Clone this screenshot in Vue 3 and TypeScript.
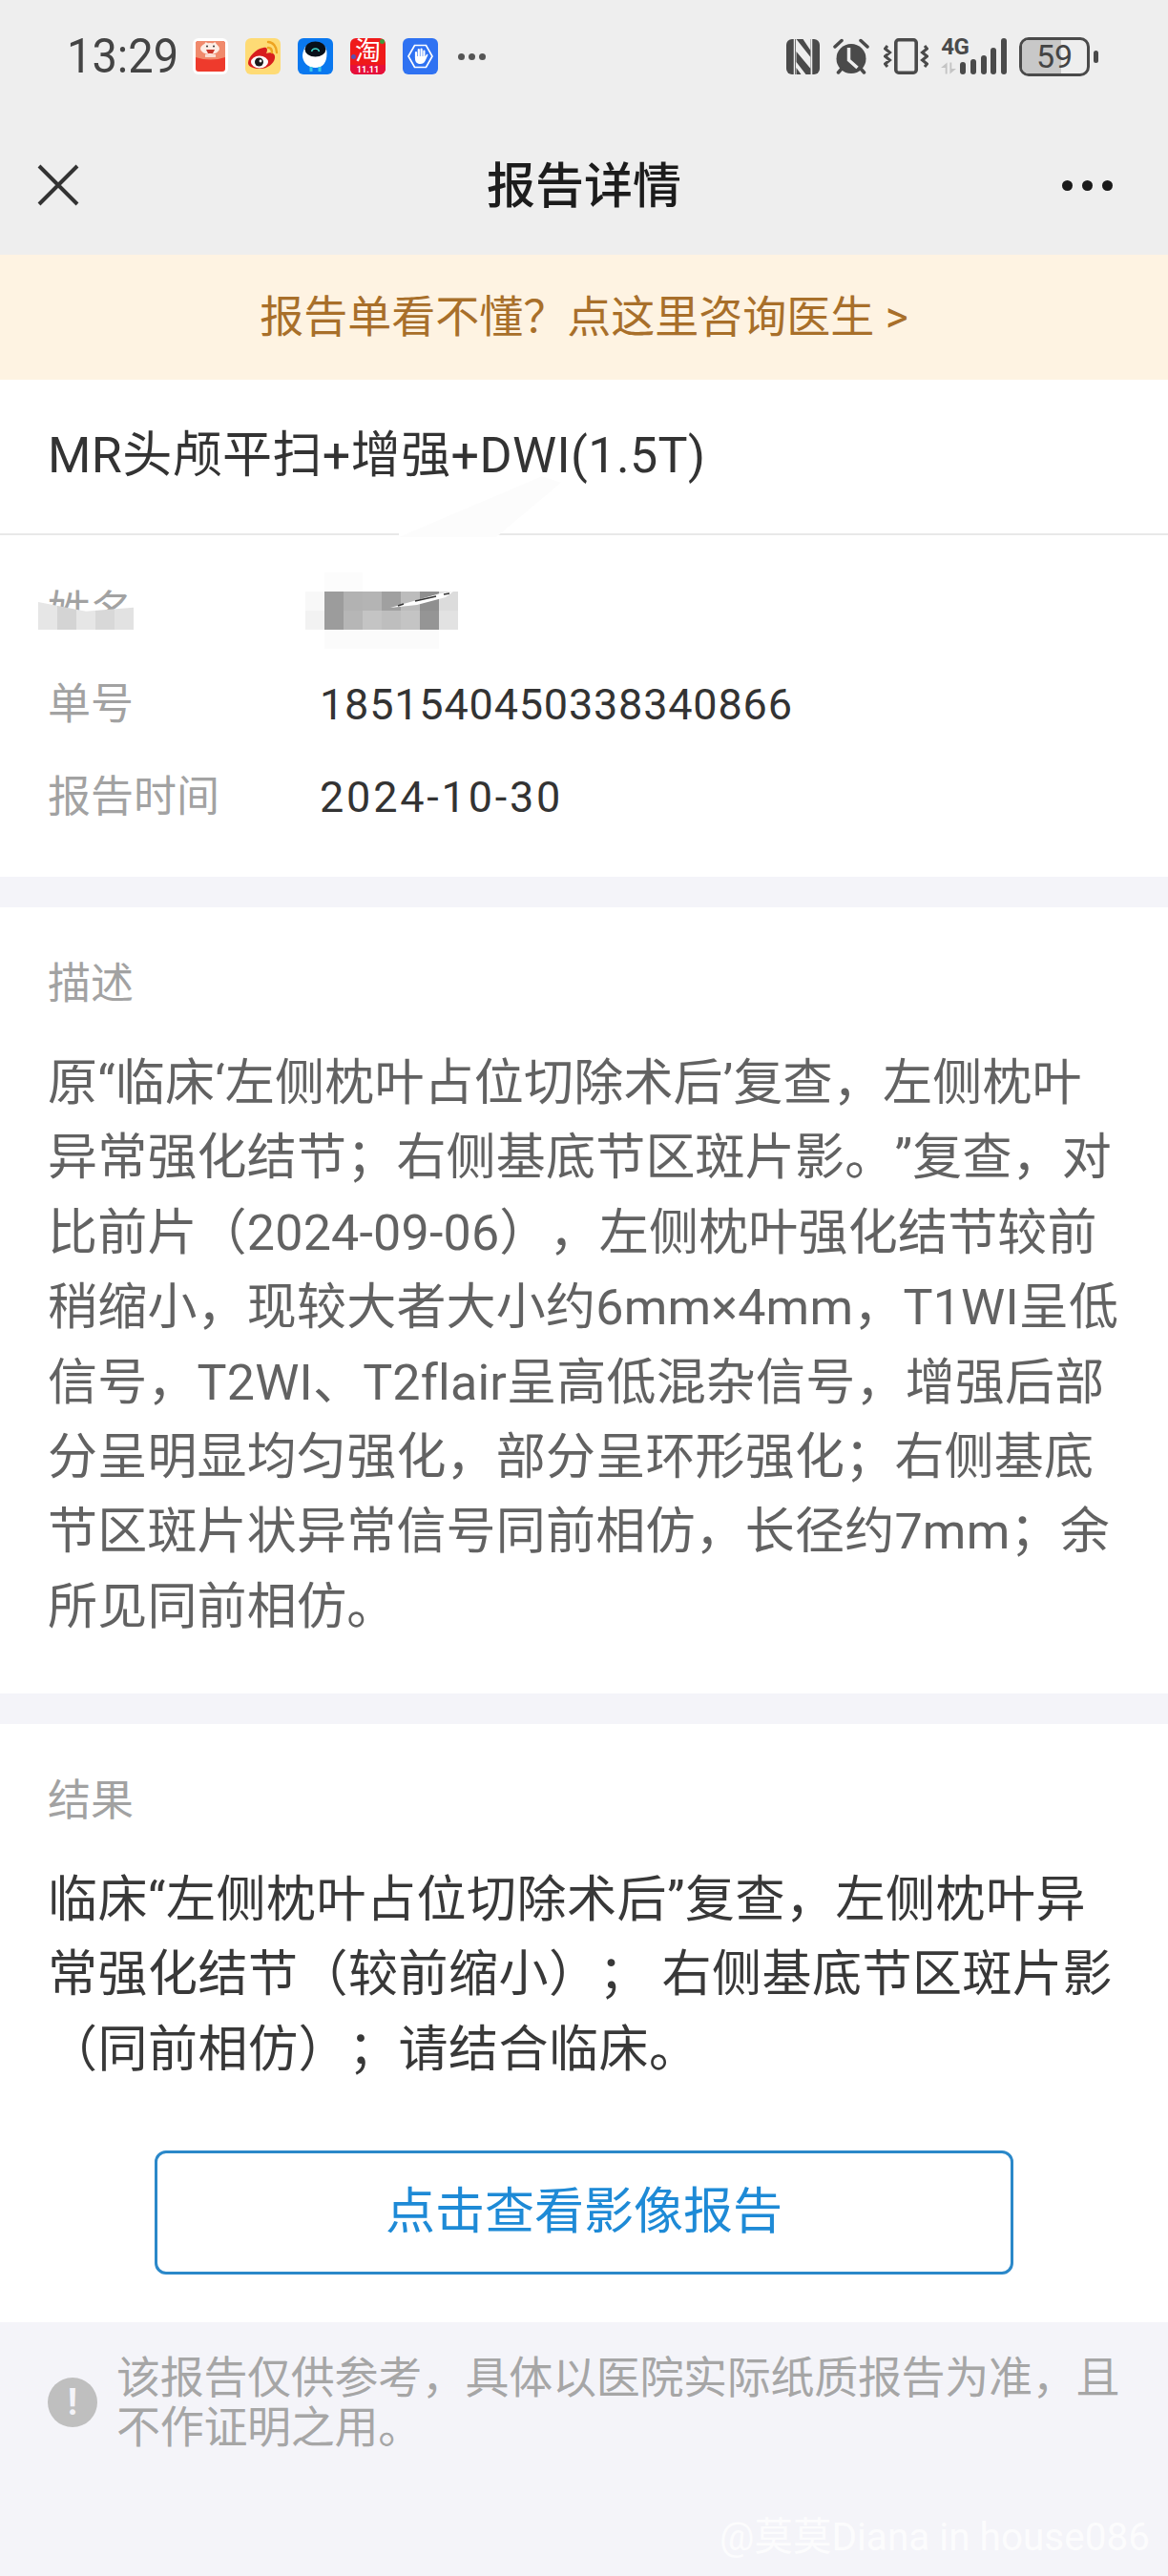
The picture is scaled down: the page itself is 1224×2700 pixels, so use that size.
<template>
  <div class="page">
    <header class="top">
      <div class="status">
        <span class="time">13:29</span>
        <div class="apps">
          <svg class="app" viewBox="0 0 37 38">
            <rect width="37" height="38" rx="6" fill="#fff" />
            <rect x="3" y="3" width="31" height="32" rx="3" fill="#ee3a2c" />
            <path d="M3 6a3 3 0 0 1 3-3h25a3 3 0 0 1 3 3v14q-15 5-31 0z" fill="#f08a6c" />
            <ellipse cx="18" cy="11" rx="10" ry="6" fill="#fdeee6" />
            <path d="M12 9l3-4M25 9l-3-4" stroke="#fdeee6" stroke-width="3" />
            <path d="M14 12h9l-2 4h-5z" fill="#c8352a" />
            <circle cx="15" cy="8.500" r="1" fill="#333" />
            <circle cx="22" cy="8.500" r="1" fill="#333" />
            <rect x="13" y="17" width="11" height="3" fill="#fbdcd0" />
          </svg>
          <svg class="app" viewBox="0 0 37 38">
            <rect width="37" height="38" rx="6" fill="#fedb75" />
            <path d="M3 26c0-6 8-15 16-16 4-1 5 2 3 6 5-2 10 0 9 5-1 6-8 11-15 11-7 0-13-2-13-6z" fill="#d81e1e" />
            <ellipse cx="15" cy="25" rx="9" ry="6.500" fill="#fff" />
            <circle cx="14.500" cy="25" r="4.500" fill="#1b1b1b" />
            <circle cx="16" cy="24" r="1.400" fill="#fff" />
            <path d="M24 4c5 0 9 5 9 11M24 10c2.500 0 4 2 4 5" fill="none" stroke="#eea320" stroke-width="2.400" stroke-linecap="round" />
          </svg>
          <svg class="app" viewBox="0 0 37 38">
            <rect width="37" height="38" rx="6" fill="#0a78ef" />
            <path d="M18.500 4c8 0 12 5 12 12 0 9-4 15-12 15S5 25 5 18C6 9 11 4 18.500 4z" fill="#fff" />
            <ellipse cx="18.500" cy="11.500" rx="11" ry="8" fill="#08101a" />
            <path d="M14.500 14c1-4 7-4 8 0" fill="none" stroke="#3fd6c8" stroke-width="1.400" />
            <path d="M14 30v5M23 30v5" stroke="#39c6e8" stroke-width="3" />
          </svg>
          <div class="taobao">
            <span class="tao">淘</span>
            <span class="eleven">11.11</span>
            <i class="fleck fleck-a"></i>
            <i class="fleck fleck-b"></i>
          </div>
          <svg class="app" viewBox="0 0 37 38">
            <rect width="37" height="38" rx="6" fill="#2f72f2" />
            <path d="M6 19l6.500-11.500h12L31 19l-6.500 11.500h-12z" fill="none" stroke="#fff" stroke-width="1.700" />
            <path d="M14 21v-6M16.800 20v-8M19.600 20v-8.500M22.400 20v-6.500" fill="none" stroke="#fff" stroke-width="2.200" stroke-linecap="round" />
            <path d="M13 19h10.500l2-2.500 1 1-3 6.500c-1 2-2.500 3-5 3-3 0-5.500-2-5.500-5z" fill="#fff" />
          </svg>
          <div class="more-small"><i></i><i></i><i></i></div>
        </div>
        <div class="sys">
          <svg class="nfc" viewBox="0 0 35 37">
            <rect width="35" height="37" rx="6" fill="#4a4a4a" />
            <path d="M10 0h15.500v37H10z" fill="#eee" />
            <path d="M10.500 0h7l8 12v7zM10.500 13l15 18v6h-5l-10-13zM10.500 30l5 7h-5z" fill="#4a4a4a" />
            <path d="M8.500 0v37M26.500 0v37" stroke="#eee" stroke-width="1.500" />
          </svg>
          <svg class="alarm" viewBox="0 0 41 38">
            <circle cx="20" cy="21.500" r="15.500" fill="#4a4a4a" />
            <path d="M3 9l7-6.500M37 9l-7-6.500M6.500 36l3.500-4M33.500 36l-3.500-4" stroke="#4a4a4a" stroke-width="3.500" stroke-linecap="round" />
            <path d="M17.500 10v13l9 8" fill="none" stroke="#eee" stroke-width="3.500" />
          </svg>
          <svg class="vib" viewBox="0 0 47 38">
            <rect x="12.800" y="1.800" width="21.400" height="34.400" rx="3" fill="none" stroke="#4a4a4a" stroke-width="3.600" />
            <path d="M4 8l-2.500 3 5 4-5 4 5 4-5 4 2.500 3M43 8l2.500 3-5 4 5 4-5 4 5 4-2.500 3" fill="none" stroke="#4a4a4a" stroke-width="3" />
          </svg>
          <div class="net">
            <span class="g">4G</span>
            <svg class="arrows" viewBox="0 0 17 13">
              <path d="M7 0v13H5V6H0zM10 13V0h2v7h5z" fill="#c4c4c4" />
            </svg>
          </div>
          <div class="bars"><i class="b1"></i><i class="b2"></i><i class="b3"></i><i class="b4"></i><i class="b5"></i></div>
          <div class="battery">
            <div class="batt-body">
              <div class="batt-fill"></div>
              <span class="batt-num">59</span>
            </div>
            <div class="batt-tip"></div>
          </div>
        </div>
      </div>
      <nav class="nav">
        <svg class="close" viewBox="0 0 44 44">
          <path d="M2 2l40 40M42 2L2 42" stroke="#333" stroke-width="4" />
        </svg>
        <div class="nav-title">报告详情</div>
        <div class="more"><i></i><i></i><i></i></div>
      </nav>
    </header>

    <div class="banner">报告单看不懂？点这里咨询医生 &gt;</div>

    <div class="card info">
      <div class="exam">MR头颅平扫+增强+DWI(1.5T)</div>
      <div class="rows">
        <div v-for="row in rows" :key="row.label" class="row">
          <span class="label">{{ row.label }}</span>
          <span class="value">{{ row.value }}</span>
        </div>
      </div>
      <!-- smeared privacy edits on top of the name row -->
      <div class="smear smear-a"></div>
      <div class="smear smear-c"></div>
      <div class="smear smear-b"></div>
      <div class="mosaic mosaic-label">
        <i v-for="(c, i) in labelCells" :key="i" :style="{ background: c }"></i>
      </div>
      <div class="mosaic mosaic-value">
        <i v-for="(c, i) in valueCells" :key="i" :style="{ background: c }"></i>
      </div>
      <svg class="slash" viewBox="0 0 70 20">
        <path d="M0 17L52 2l14-2-8 6-30 8z" fill="#fff" />
        <path d="M8 15l6-2M26 10l22-5M56 3l6-1" stroke="#333" stroke-width="1.500" />
      </svg>
    </div>

    <section class="card block">
      <div class="block-title">描述</div>
      <div class="text muted-dark">
        <div v-for="line in description" :key="line">{{ line }}</div>
      </div>
    </section>

    <section class="card block result">
      <div class="block-title">结果</div>
      <div class="text strong">
        <div v-for="line in result" :key="line">{{ line }}</div>
      </div>
      <div class="btn">点击查看影像报告</div>
    </section>

    <footer class="foot">
      <div class="foot-row">
        <span class="warn">!</span>
        <span class="foot-text">该报告仅供参考，具体以医院实际纸质报告为准，且不作证明之用。</span>
      </div>
      <span class="mark">@莫莫Diana in house086</span>
    </footer>
  </div>
</template>

<script setup lang="ts">
const rows = [
  { label: '姓名', value: '' },
  { label: '单号', value: '1851540450338340866' },
  { label: '报告时间', value: '2024-10-30' },
]

const labelCells = ['#e6e6e6', '#d4d4d4', '#e6e6e6', '#d8d8d8', '#e2e2e2']
// 8 x 4 grid of the pixelated name
const valueCells = [
  '#fff', '#fcfcfc', '#fcfcfc', '#fff', '#fff', '#fff', '#fff', '#fff',
  '#f8f8f8', '#9c9c9c', '#b2b2b2', '#b4b4b4', '#a0a0a0', '#bcbcbc', '#8f8f8f', '#dcdcdc',
  '#f2f2f2', '#9c9c9c', '#b6b6b6', '#c4c4c4', '#bebebe', '#c4c4c4', '#959595', '#e2e2e2',
  '#fff', '#fbfbfb', '#fbfbfb', '#fbfbfb', '#fbfbfb', '#fbfbfb', '#fbfbfb', '#fff',
]

const description = [
  '原“临床‘左侧枕叶占位切除术后’复查，左侧枕叶',
  '异常强化结节；右侧基底节区斑片影。”复查，对',
  '比前片（2024-09-06），左侧枕叶强化结节较前',
  '稍缩小，现较大者大小约6mm×4mm，T1WI呈低',
  '信号，T2WI、T2flair呈高低混杂信号，增强后部',
  '分呈明显均匀强化，部分呈环形强化；右侧基底',
  '节区斑片状异常信号同前相仿，长径约7mm；余',
  '所见同前相仿。',
]
const result = [
  '临床“左侧枕叶占位切除术后”复查，左侧枕叶异',
  '常强化结节（较前缩小）； 右侧基底节区斑片影',
  '（同前相仿）；请结合临床。',
]
</script>

<style>
body {
  margin: 0;
  background: #f4f4f9;
}
</style>

<style scoped>
.page {
  width: 1224px;
  height: 2700px;
  overflow: hidden;
  position: relative;
  background: #f4f4f9;
  font-family: Roboto, "Noto Sans CJK SC", sans-serif;
  color: #333;
}

.top {
  background: #eeeeee;
  height: 267px;
}

.status {
  display: flex;
  align-items: center;
  height: 38px;
  padding: 40px 73px 0 70px;
}

.time {
  font-size: 47px;
  line-height: 38px;
  color: #444;
  width: 132px;
  transform: scaleY(1.08);
}

.apps {
  display: flex;
  align-items: center;
  gap: 18px;
}

.app,
.taobao {
  width: 37px;
  height: 38px;
  flex: none;
}

.taobao {
  position: relative;
  background: #ef1a1a;
  border-radius: 6px;
  display: flex;
  flex-flow: column;
  align-items: center;
}

.tao {
  color: #fff;
  font-size: 27px;
  line-height: 28px;
}

.eleven {
  width: 100%;
  height: 10px;
  background: #e6103a;
  border-radius: 0 0 6px 6px;
  color: #fff;
  font-size: 9px;
  line-height: 10px;
  font-weight: 700;
  text-align: center;
}

.fleck {
  position: absolute;
  width: 5px;
  height: 5px;
  border-radius: 50%;
}

.fleck-a {
  left: 1px;
  top: 17px;
  background: #5a4fb0;
}

.fleck-b {
  right: 1px;
  top: 1px;
  background: #3f9a3a;
}

.more-small {
  display: flex;
  gap: 4px;
  margin-left: 3px;
}

.more-small i {
  width: 7px;
  height: 7px;
  border-radius: 50%;
  background: #555;
}

.sys {
  display: flex;
  align-items: center;
  margin-left: auto;
}

.nfc {
  width: 35px;
  height: 37px;
  margin-right: 13px;
}

.alarm {
  width: 41px;
  height: 38px;
  margin-right: 13px;
}

.vib {
  width: 47px;
  height: 38px;
  margin-right: 13px;
}

.net {
  width: 27px;
  height: 38px;
  margin-right: -7px;
  display: flex;
  flex-flow: column;
}

.g {
  font-size: 24px;
  line-height: 19px;
  font-weight: 700;
  color: #4a4a4a;
  letter-spacing: -0.5px;
}

.arrows {
  width: 16px;
  height: 13px;
  margin-top: 6px;
}

.bars {
  display: flex;
  align-items: flex-end;
  gap: 4.700px;
  height: 38px;
  margin-right: 13px;
}

.bars i {
  width: 6px;
  border-radius: 3px;
  background: #4a4a4a;
}

.b1 { height: 13px; }
.b2 { height: 16px; }
.b3 { height: 20px; }
.b4 { height: 28px; }
.b5 { height: 38px; }

.battery {
  display: flex;
  align-items: center;
  gap: 4px;
}

.batt-body {
  position: relative;
  width: 74px;
  height: 41px;
  box-sizing: border-box;
  border: 3px solid #4a4a4a;
  border-radius: 10px;
  overflow: hidden;
  display: flex;
  align-items: center;
  justify-content: center;
}

.batt-fill {
  position: absolute;
  left: 0;
  top: 0;
  bottom: 0;
  width: 41px;
  background: #c8c8c8;
}

.batt-num {
  position: relative;
  font-size: 34px;
  color: #444;
  line-height: 35px;
}

.batt-tip {
  width: 5px;
  height: 13px;
  border-radius: 3px;
  background: #4a4a4a;
}

.nav {
  display: flex;
  align-items: center;
  justify-content: space-between;
  height: 50px;
  margin-top: 91px;
  padding: 0 58px 0 39px;
  position: relative;
}

.close {
  width: 44px;
  height: 44px;
}

.nav-title {
  font-size: 51px;
  line-height: 50px;
  font-weight: 500;
  color: #1c1c1c;
  position: absolute;
  left: 0;
  right: 0;
  top: 2px;
  text-align: center;
}

.more {
  display: flex;
  gap: 10px;
}

.more i {
  width: 11px;
  height: 11px;
  border-radius: 50%;
  background: #1a1a1a;
}

.banner {
  height: 131px;
  background: #fef3e2;
  color: #a86f2a;
  font-size: 46px;
  line-height: 131px;
  text-align: center;
}

.card {
  background: #fff;
}

.info {
  position: relative;
  height: 521px;
  margin-bottom: 32px;
}

.exam {
  line-height: 159px;
  padding-left: 50px;
  font-size: 52px;
  letter-spacing: 0.400px;
  border-bottom: 2px solid #e8e8e8;
  box-sizing: border-box;
  height: 163px;
}

.rows {
  padding-top: 32px;
}

.row {
  display: flex;
  height: 97px;
  align-items: baseline;
  font-size: 45px;
  line-height: 97px;
}

.label {
  width: 285px;
  margin-left: 50px;
  color: #a2a2a2;
}

.value {
  color: #333;
  letter-spacing: 0.800px;
}

.row:last-child .value {
  letter-spacing: 2.800px;
}

.smear {
  position: absolute;
  background: #fff;
}

.smear-a {
  left: 418px;
  top: 155px;
  width: 102px;
  height: 14px;
}

.smear-c {
  left: 418px;
  top: 100px;
  width: 170px;
  height: 65px;
  background: #fcfcfc;
  clip-path: polygon(0 100%, 88% 2%, 100% 12%, 60% 100%);
}

.smear-b {
  left: 30px;
  top: 247px;
  width: 120px;
  height: 36px;
}

.mosaic {
  position: absolute;
  display: grid;
  grid-auto-rows: 20px;
}

.mosaic i {
  display: block;
}

.mosaic-label {
  left: 40px;
  top: 233px;
  width: 100px;
  height: 29px;
  grid-template-columns: repeat(5, 20px);
  grid-auto-rows: 29px;
  clip-path: polygon(0 0, 50% 34%, 100% 20%, 100% 100%, 0 100%);
}

.mosaic-value {
  left: 320px;
  top: 202px;
  width: 160px;
  grid-template-columns: repeat(8, 20px);
}

.slash {
  position: absolute;
  left: 409px;
  top: 222px;
  width: 70px;
  height: 20px;
}

.block {
  padding: 52px 0 0 50px;
  margin-bottom: 32px;
  height: 824px;
  box-sizing: border-box;
}

.block-title {
  font-size: 45px;
  line-height: 58px;
  color: #a2a2a2;
}

.text {
  margin: 36px 0 0;
  font-size: 52px;
  line-height: 78.400px;
  letter-spacing: 0.200px;
  white-space: nowrap;
  text-spacing-trim: space-all;
}

.muted-dark {
  color: #626262;
}

.strong {
  color: #383838;
  letter-spacing: 0.500px;
}

.result {
  height: 627px;
  margin-bottom: 0;
  padding-right: 50px;
}

.btn {
  margin: 66px auto 0;
  width: 900px;
  height: 130px;
  box-sizing: border-box;
  border: 3px solid #2b88c9;
  border-radius: 12px;
  font-size: 52px;
  line-height: 124px;
  color: #1e8ad6;
  text-align: center;
}

.foot {
  position: relative;
  height: 267px;
  padding: 32px 40px 0 50px;
  box-sizing: border-box;
}

.foot-row {
  display: flex;
  align-items: center;
  gap: 20px;
}

.warn {
  flex: none;
  width: 52px;
  height: 52px;
  border-radius: 50%;
  background: #bfbfbf;
  color: #f4f4f9;
  font-size: 38px;
  line-height: 52px;
  text-align: center;
  font-weight: 700;
}

.foot-text {
  font-size: 46px;
  line-height: 52px;
  letter-spacing: -0.300px;
  color: #a6a6a6;
}

.mark {
  position: absolute;
  right: 19px;
  bottom: 16px;
  font-size: 40.500px;
  color: rgba(255, 255, 255, 0.75);
}
</style>
